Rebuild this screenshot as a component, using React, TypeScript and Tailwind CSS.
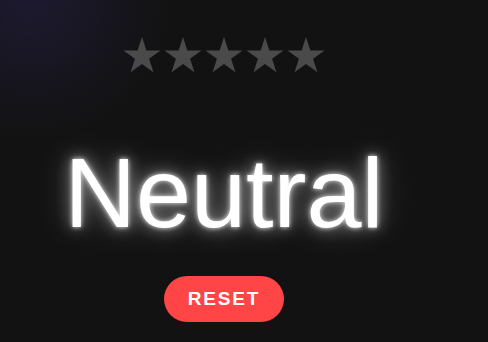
import React from "react";

function Star() {
  const R = 19.5;
  const r = R * 0.382;
  const cx = 19;
  const cy = 19.5;
  const pts: string[] = [];
  for (let i = 0; i < 10; i++) {
    const rad = i % 2 === 0 ? R : r;
    const a = (Math.PI / 5) * i - Math.PI / 2;
    pts.push(`${(cx + rad * Math.cos(a)).toFixed(2)},${(cy + rad * Math.sin(a)).toFixed(2)}`);
  }
  return (
    <svg width="38" height="36" viewBox="0 0 38 36" className="block">
      <polygon points={pts.join(" ")} fill="#4a4a4a" />
    </svg>
  );
}

export default function App() {
  return (
    <div className="h-[342px] w-[488px] overflow-hidden bg-[#121212] bg-[radial-gradient(circle_at_30px_0px,#1d1a30_0%,rgba(18,18,18,0)_140px)] font-['Liberation_Sans',Arial,sans-serif]">
      <div className="flex w-[448px] flex-col items-center pt-[37px]">
        <div className="flex gap-[3px]">
          <Star />
          <Star />
          <Star />
          <Star />
          <Star />
        </div>
        <div className="mt-[69px] text-[99px] leading-[102px] text-white [text-shadow:0_0_5px_rgba(255,255,255,0.9),0_0_16px_rgba(255,255,255,0.55),0_0_34px_rgba(255,255,255,0.35)]">
          Neutral
        </div>
        <button className="mt-[32px] h-[46px] rounded-full bg-[#ff4545] px-[24px] text-[19px] font-bold tracking-[1.8px] text-white">
          RESET
        </button>
      </div>
    </div>
  );
}
